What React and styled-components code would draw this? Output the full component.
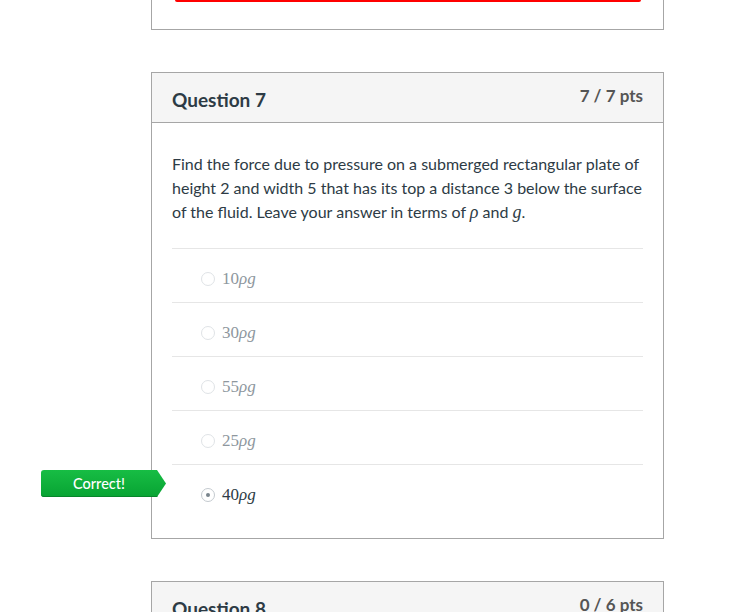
import React from 'react';
import styled, { createGlobalStyle } from 'styled-components';

const GlobalStyle = createGlobalStyle`
  html, body {
    margin: 0;
    padding: 0;
    background: #ffffff;
  }

  body {
    font-family: Lato, "Open Sans", sans-serif;
    color: #2d3b45;
  }
`;

let Page = styled.div`
  width: 513px;
  margin-left: 151px;
  display: flex;
  flex-direction: column;
  gap: 42px;
`;

let PrevCard = styled.div`
  height: 29px;
  border: 1px solid #a6a6a6;
  border-top: none;
`;

let RedBar = styled.div`
  height: 2px;
  margin: 0 22px 0 23px;
  background: #ff0000;
  border-radius: 0 0 2px 2px;
`;

let Card = styled.div`
  border: 1px solid #a6a6a6;
  background: white;
`;

let CardHeader = styled.div`
  display: flex;
  justify-content: space-between;
  align-items: flex-start;
  height: 49px;
  padding: 0 20px;
  background: #f5f5f5;
  border-bottom: ${(p) => (p.$open ? 'none' : '1px solid #a6a6a6')};
`;

let Title = styled.h2`
  margin: 15px 0 0;
  font-size: 19px;
  font-weight: 700;
  line-height: 24px;
  color: #2d3b45;
`;

let Points = styled.div`
  margin-top: 12px;
  font-size: 17px;
  font-weight: 700;
  line-height: 22px;
  color: #555555;
`;

let CardBody = styled.div`
  padding: 29px 20px 20px;
`;

let QuestionText = styled.p`
  margin: 0 0 24px;
  font-size: 16px;
  line-height: 24px;
  color: #2d3b45;
`;

let MathVar = styled.span`
  font-family: "Liberation Serif", "DejaVu Serif", serif;
  font-style: italic;
  font-size: 18px;
`;

let AnswerList = styled.div`
  display: flex;
  flex-direction: column;
`;

let AnswerRow = styled.div`
  position: relative;
  display: flex;
  align-items: center;
  gap: 7px;
  height: 47px;
  padding: 6px 0 0 29px;
  border-top: 1px solid #e6e6e6;
`;

let Radio = styled.span`
  width: 12px;
  height: 12px;
  border-radius: 50%;
  border: 1px solid ${(p) => (p.$checked ? '#c4cacf' : '#dfe3e6')};
  background: white;
  display: flex;
  align-items: center;
  justify-content: center;

  &::after {
    content: '';
    display: ${(p) => (p.$checked ? 'block' : 'none')};
    width: 4px;
    height: 4px;
    border-radius: 50%;
    background: #7a858d;
  }
`;

let AnswerText = styled.span`
  font-family: "Liberation Serif", "DejaVu Serif", serif;
  font-size: 17px;
  color: ${(p) => (p.$checked ? '#2d3b45' : '#8e979e')};

  i {
    font-style: italic;
  }
`;

let CorrectBadge = styled.div`
  position: absolute;
  left: -131px;
  top: 5px;
  width: 125px;
  height: 27px;
  box-sizing: border-box;
  padding-right: 9px;
  display: flex;
  align-items: center;
  justify-content: center;
  border-radius: 3px;
  background: linear-gradient(#17bd44, #08a333);
  box-shadow: inset 0 -1px 0 #07852a;
  clip-path: polygon(0 0, 116px 0, 100% 50%, 116px 100%, 0 100%);
  color: white;
  font-size: 14.5px;
  font-weight: 500;
`;

const answers = [
  { value: '10', checked: false },
  { value: '30', checked: false },
  { value: '55', checked: false },
  { value: '25', checked: false },
  { value: '40', checked: true, correct: true },
];

function App() {
  return (
    <>
      <GlobalStyle />
      <Page>
        <PrevCard>
          <RedBar />
        </PrevCard>

        <Card>
          <CardHeader>
            <Title>Question 7</Title>
            <Points>7 / 7 pts</Points>
          </CardHeader>
          <CardBody>
            <QuestionText>
              Find the force due to pressure on a submerged rectangular plate of
              height 2 and width 5 that has its top a distance 3 below the surface
              of the fluid. Leave your answer in terms of <MathVar>ρ</MathVar> and{' '}
              <MathVar>g</MathVar>.
            </QuestionText>
            <AnswerList>
              {answers.map((a) => (
                <AnswerRow key={a.value}>
                  {a.correct && <CorrectBadge>Correct!</CorrectBadge>}
                  <Radio $checked={a.checked} />
                  <AnswerText $checked={a.checked}>
                    {a.value}
                    <i>ρg</i>
                  </AnswerText>
                </AnswerRow>
              ))}
            </AnswerList>
          </CardBody>
        </Card>

        <Card>
          <CardHeader $open>
            <Title>Question 8</Title>
            <Points>0 / 6 pts</Points>
          </CardHeader>
        </Card>
      </Page>
    </>
  );
}

export default App;
